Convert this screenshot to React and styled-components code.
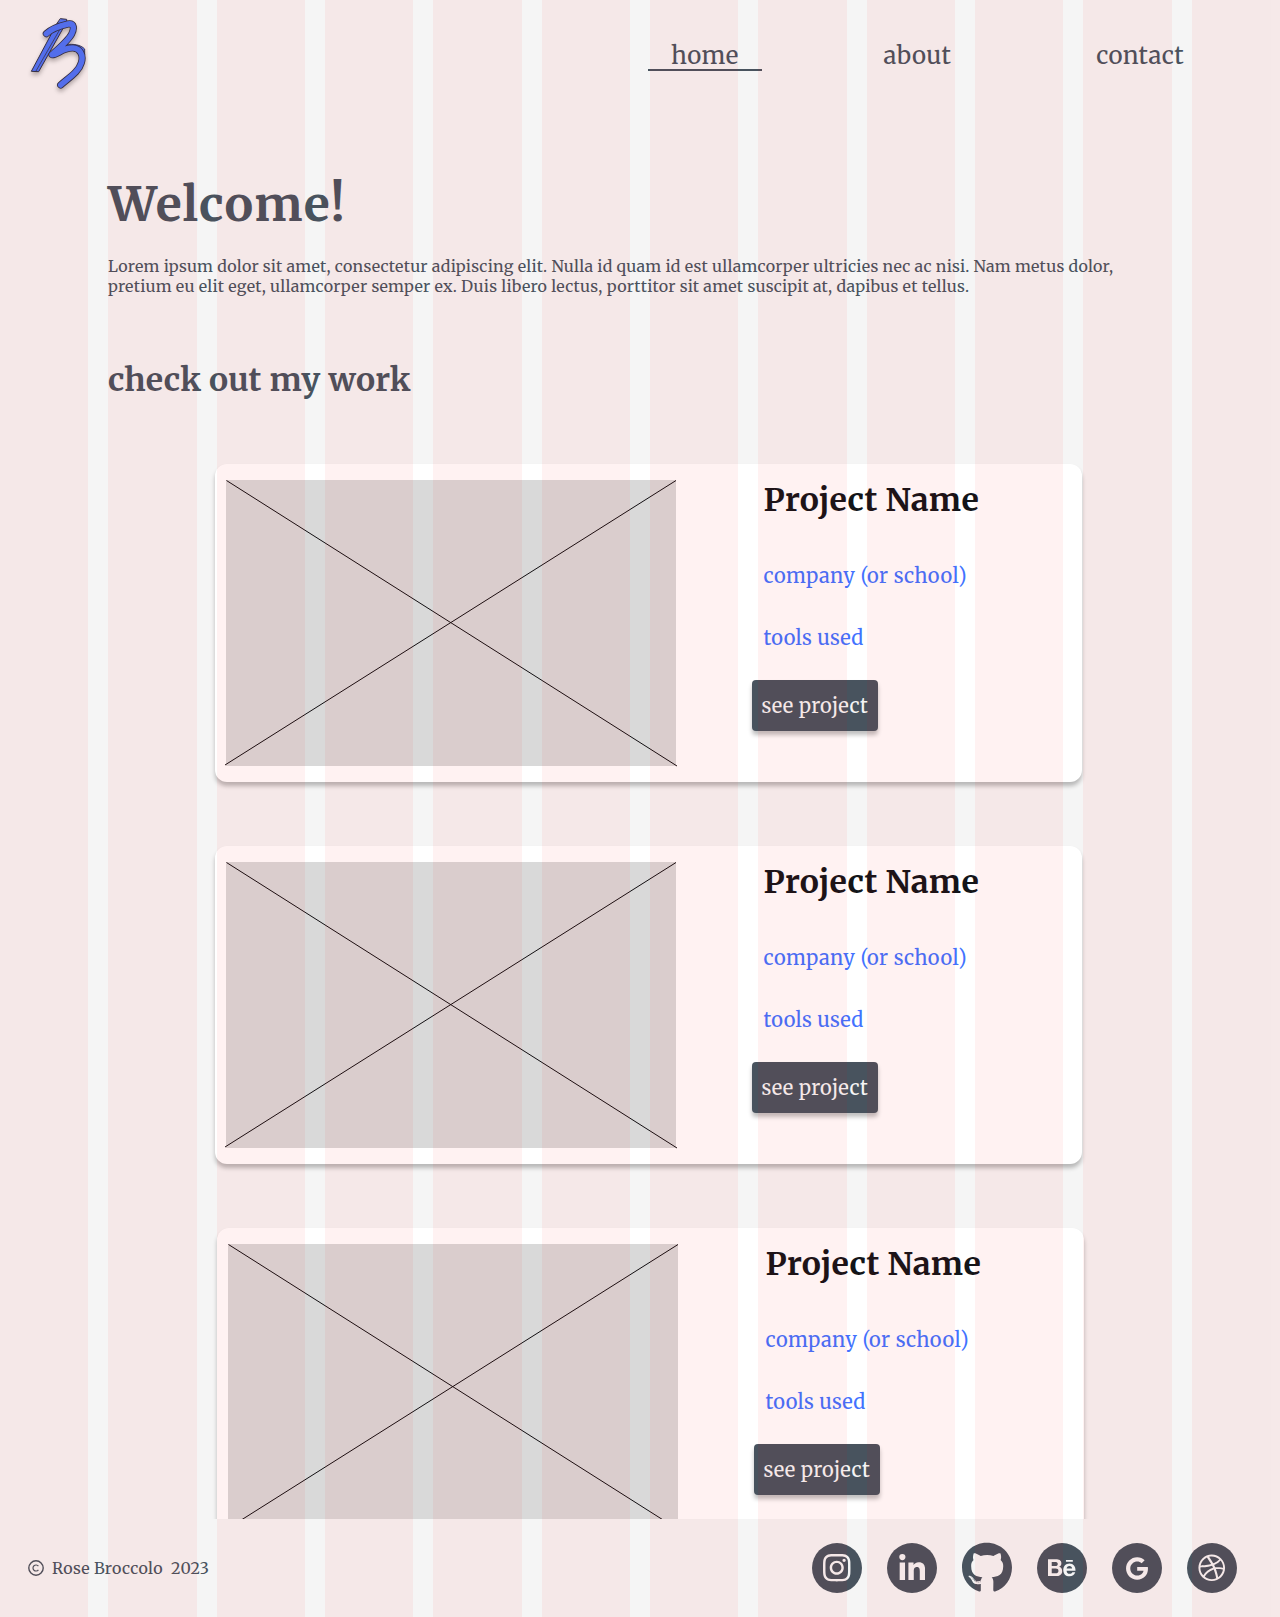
import React from 'react';
import styled, { createGlobalStyle, css } from 'styled-components';
import {
  FaInstagram,
  FaLinkedinIn,
  FaGithub,
  FaBehance,
  FaGoogle,
  FaDribbble,
} from 'react-icons/fa';

const color = {
  page: '#f5f5f5',
  card: '#ffffff',
  ink: '#48535e',
  title: '#121519',
  link: '#4272ff',
  placeholder: '#d9d9d9',
};

const shadow = '0 4px 4px rgba(0, 0, 0, 0.25)';

const GlobalStyle = createGlobalStyle`
  * { box-sizing: border-box; }
  body {
    margin: 0;
    background: ${color.page};
    color: ${color.ink};
    font-family: Merriweather, 'Noto Serif', 'DejaVu Serif', serif;
  }
  h1, h2, h3, p, ul { margin: 0; padding: 0; }
`;

const Page = styled.div`
  position: relative;
  display: flex;
  flex-direction: column;
  height: 1617px;
  overflow: hidden;
  background: ${color.page};
`;

const ColumnOverlay = styled.div`
  position: absolute;
  inset: 0;
  z-index: 10;
  display: grid;
  grid-template-columns: repeat(12, 1fr);
  column-gap: 20px;
  pointer-events: none;
`;

const OverlayColumn = styled.span`
  background: rgba(255, 0, 0, 0.05);
`;

const Header = styled.header`
  display: flex;
  flex: none;
  justify-content: space-between;
  height: 100px;
  padding: 12px 73px 0 24px;
`;

const LogoMark = styled.svg`
  width: 70px;
  height: 84px;
  overflow: visible;
  filter: drop-shadow(0 3px 2px rgba(0, 0, 0, 0.28));
`;

const Nav = styled.nav`
  display: flex;
  align-items: flex-start;
  gap: 99px;
  padding-top: 28px;
`;

const NavLink = styled.a`
  height: 31px;
  padding: 0 23px;
  border-bottom: 2px solid ${(p) => (p.$active ? color.ink : 'transparent')};
  font-size: 24px;
  line-height: 31px;
  letter-spacing: 0.35px;
`;

const Main = styled.main`
  flex: 1;
  min-height: 0;
  padding: 74px 108px 0;
  overflow: hidden;
`;

const Welcome = styled.h1`
  font-size: 48px;
  line-height: 60px;
  font-weight: 700;
  letter-spacing: 1.1px;
`;

const Intro = styled.p`
  margin-top: 22px;
  font-size: 16px;
  line-height: 20px;
  letter-spacing: 0.245px;
  white-space: nowrap;
`;

const SectionTitle = styled.h2`
  margin-top: 64px;
  font-size: 32px;
  line-height: 40px;
  font-weight: 700;
  letter-spacing: 0.22px;
`;

const Projects = styled.div`
  display: flex;
  flex-direction: column;
  gap: 64px;
  margin-top: 64px;
  padding-left: 107px;
`;

const Card = styled.article`
  display: flex;
  gap: 75.5px;
  width: 867px;
  height: 318px;
  margin-left: ${(p) => (p.$shifted ? '2px' : '0')};
  padding: 16px 11px;
  border-radius: 12px;
  background: ${color.card};
  box-shadow: ${shadow};
`;

const Thumb = styled.svg`
  flex: none;
  width: 450px;
  height: 286px;
  overflow: visible;
  background: ${color.placeholder};
  stroke: #120f12;
  stroke-width: 1;
`;

const Info = styled.div`
  display: flex;
  flex-direction: column;
  align-items: flex-start;
`;

const ProjectName = styled.h3`
  padding-left: 12px;
  color: ${color.title};
  font-size: 32px;
  line-height: 40px;
  font-weight: 700;
  letter-spacing: 0.35px;
`;

const Detail = styled.p`
  margin-top: ${(p) => (p.$first ? '43px' : '37px')};
  padding-left: 12px;
  color: ${color.link};
  font-size: 20px;
  line-height: 25px;
  letter-spacing: ${(p) => (p.$first ? '0.45px' : '0.3px')};
`;

const ProjectButton = styled.button`
  width: 126.5px;
  height: 51px;
  margin-top: 30px;
  padding: 0;
  border: 0;
  border-radius: 4px;
  background: ${color.ink};
  box-shadow: ${shadow};
  color: ${color.page};
  font-family: inherit;
  font-size: 20px;
  line-height: 51px;
  letter-spacing: 0.35px;
`;

const Footer = styled.footer`
  display: flex;
  flex: none;
  align-items: center;
  justify-content: space-between;
  height: 98px;
  padding: 0 43px 0 28px;
`;

const Copyright = styled.div`
  display: flex;
  align-items: center;
  gap: 8px;
  font-size: 16px;
  line-height: 20px;
  letter-spacing: 0.3px;
  white-space: pre;

  svg {
    width: 16px;
    height: 16px;
    fill: none;
    stroke: currentColor;
  }
`;

const Socials = styled.div`
  display: flex;
  gap: 25px;
`;

const Social = styled.a`
  display: flex;
  align-items: center;
  justify-content: center;
  width: 50px;
  height: 50px;
  padding-top: ${(p) => p.$drop || 0}px;
  color: ${color.page};

  ${(p) =>
    p.$bare
      ? css`
          color: ${color.ink};
        `
      : css`
          border-radius: 50%;
          background: ${color.ink};
        `}

  svg {
    flex: none;
    width: ${(p) => p.$w}px;
    height: ${(p) => p.$h}px;
  }
`;

const socials = [
  { name: 'Instagram', Icon: FaInstagram, w: 27.5, h: 31.4 },
  { name: 'LinkedIn', Icon: FaLinkedinIn, w: 26.4, h: 29.6, drop: 2 },
  { name: 'GitHub', Icon: FaGithub, w: 50, h: 51.6, bare: true },
  { name: 'Behance', Icon: FaBehance, w: 27.5, h: 27.5 },
  { name: 'Google', Icon: FaGoogle, w: 22, h: 23 },
  { name: 'Dribbble', Icon: FaDribbble, w: 27.5, h: 27.5 },
];

const projects = [
  { id: 1, shifted: false },
  { id: 2, shifted: false },
  { id: 3, shifted: true },
];

const bowl =
  'M67 65 C82 51 110 41 132 36 C151 33 151 50 143 66 C134 84 104 110 84 128 C102 129 114 107 147 108 C169 109 179 130 172 152 C164 180 136 196 110 219';

function Logo() {
  return (
    <LogoMark viewBox="0 0 210 252" role="img" aria-label="B">
      <g strokeLinejoin="round" strokeLinecap="round">
        <path d="M110 20 L128 22 L128 30 L44 179 L22 178 L98 36 Z" fill="#4a74f8" stroke="#2b3145" strokeWidth="3" />
        <path d="M118 34 L36 177" fill="none" stroke="#2b3145" strokeWidth="2.2" />
        <path
          d="M124 29 C146 22 160 36 154 58 C149 77 138 86 126 98 C148 95 170 98 182 111 L182 130 L168 120 L140 106 L110 112 L142 70 L146 44 Z"
          fill="#4a74f8"
          stroke="#2b3145"
          strokeWidth="2.6"
        />
        <path d={bowl} fill="none" stroke="#2b3145" strokeWidth="21.5" />
        <path d={bowl} fill="none" stroke="#4a74f8" strokeWidth="16.5" />
      </g>
    </LogoMark>
  );
}

function ProjectCard({ shifted }) {
  return (
    <Card $shifted={shifted}>
      <Thumb viewBox="0 0 450 286" aria-hidden="true">
        <path d="M0.5 0.5 L451 286" />
        <path d="M450 0.5 L-1 285" />
      </Thumb>
      <Info>
        <ProjectName>Project Name</ProjectName>
        <Detail $first>company (or school)</Detail>
        <Detail>tools used</Detail>
        <ProjectButton>see project</ProjectButton>
      </Info>
    </Card>
  );
}

export default function App() {
  return (
    <Page>
      <GlobalStyle />
      <Header>
        <Logo />
        <Nav>
          <NavLink $active>home</NavLink>
          <NavLink>about</NavLink>
          <NavLink>contact</NavLink>
        </Nav>
      </Header>
      <Main>
        <Welcome>Welcome!</Welcome>
        <Intro>
          Lorem ipsum dolor sit amet, consectetur adipiscing elit. Nulla id quam id est ullamcorper ultricies nec ac nisi. Nam metus dolor,
          <br />
          pretium eu elit eget, ullamcorper semper ex. Duis libero lectus, porttitor sit amet suscipit at, dapibus et tellus.
        </Intro>
        <SectionTitle>check out my work</SectionTitle>
        <Projects>
          {projects.map((p) => (
            <ProjectCard key={p.id} shifted={p.shifted} />
          ))}
        </Projects>
      </Main>
      <Footer>
        <Copyright>
          <svg viewBox="0 0 16 16" aria-hidden="true">
            <circle cx="8" cy="8" r="7.2" strokeWidth="1.4" />
            <path d="M10.4 6.2 A3 3 0 1 0 10.4 9.8" strokeWidth="1.2" />
          </svg>
          <span>{'Rose Broccolo  2023'}</span>
        </Copyright>
        <Socials>
          {socials.map(({ name, Icon, w, h, bare, drop }) => (
            <Social key={name} aria-label={name} $w={w} $h={h} $bare={bare} $drop={drop}>
              <Icon />
            </Social>
          ))}
        </Socials>
      </Footer>
      <ColumnOverlay aria-hidden="true">
        {Array.from({ length: 12 }, (_, i) => (
          <OverlayColumn key={i} />
        ))}
      </ColumnOverlay>
    </Page>
  );
}
